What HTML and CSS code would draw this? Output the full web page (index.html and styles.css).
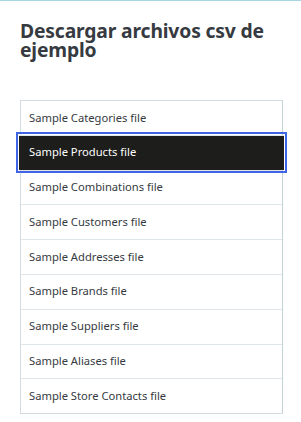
FILE: index.html
```html
<!DOCTYPE html>
<html lang="es">
<head>
<meta charset="utf-8">
<link rel="stylesheet" href="styles.css">
</head>
<body>
<div class="panel">
  <h2 class="title">Descargar archivos csv de ejemplo</h2>
  <ul class="files">
    <li class="file">Sample Categories file</li>
    <li class="file active">Sample Products file</li>
    <li class="file">Sample Combinations file</li>
    <li class="file">Sample Customers file</li>
    <li class="file">Sample Addresses file</li>
    <li class="file">Sample Brands file</li>
    <li class="file">Sample Suppliers file</li>
    <li class="file">Sample Aliases file</li>
    <li class="file">Sample Store Contacts file</li>
  </ul>
</div>
</body>
</html>
```
FILE: styles.css
```css
html, body {
  margin: 0;
  padding: 0;
  background: #fff;
}
body {
  border-top: 1px solid #a9d6e2;
  font-family: "Noto Sans", "Open Sans", sans-serif;
  color: #363a41;
}
.panel {
  padding: 20px 18px 0 20px;
}
.title {
  margin: 0;
  font-size: 19.3px;
  line-height: 19px;
  font-weight: 700;
  color: #363a41;
  letter-spacing: -0.15px;
}
.files {
  list-style: none;
  margin: 41px 0 0 0;
  padding: 0;
  border: 1px solid #d3dde1;
  border-right-color: #c3d2d7;
}
.file {
  padding: 8.5px 8px;
  font-size: 11.2px;
  line-height: 16.8px;
  border-top: 1px solid #dfe6e9;
  color: #363a41;
}
.file:first-child {
  border-top: none;
}
.active {
  margin: 0 -2px;
  padding-left: 10px;
  background: #1d1d1b;
  color: #fff;
  outline: 2px solid #3f64e6;
  outline-offset: 1px;
  position: relative;
}
```
